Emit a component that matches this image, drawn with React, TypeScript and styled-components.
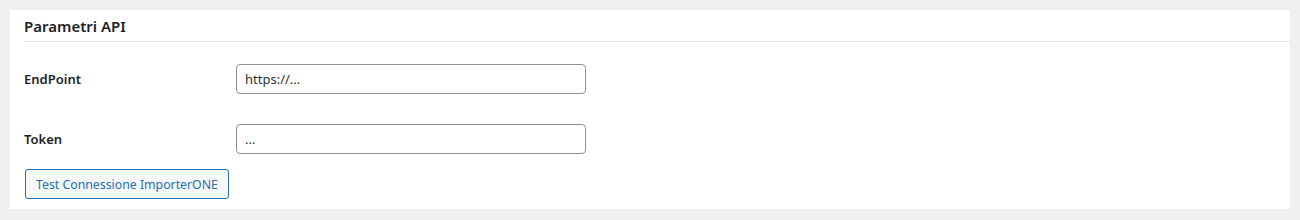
import React from 'react';
import styled, { createGlobalStyle } from 'styled-components';

const GlobalStyle = createGlobalStyle`
  html, body {
    margin: 0;
    padding: 0;
    background: #f0f0f1;
    font-family: "Noto Sans", "Open Sans", sans-serif;
    color: #1d2327;
  }
`;

const Page = styled.div`
  padding: 10px;
`;

const Postbox = styled.div`
  background: #fff;
  padding: 0 0 10px 14px;
`;

const BoxHeader = styled.h2`
  margin: 0;
  height: 31px;
  display: flex;
  align-items: center;
  font-size: 15px;
  font-weight: 600;
  color: #1d2327;
  border-bottom: 1px solid #e6e7e8;
`;

const FormTable = styled.div`
  padding-top: 7px;
`;

const FieldRow = styled.div`
  display: grid;
  grid-template-columns: 212px 350px;
  align-items: center;
  padding: 15px 0;
`;

const Label = styled.label`
  font-size: 13px;
  font-weight: 600;
  color: #1d2327;
`;

const TextInput = styled.input`
  box-sizing: border-box;
  width: 350px;
  height: 30px;
  padding: 0 8px;
  border: 1px solid #8c8f94;
  border-radius: 4px;
  font-family: inherit;
  font-size: 13px;
  color: #2c3338;
  background: #fff;
  outline: none;
`;

const Button = styled.button`
  box-sizing: border-box;
  height: 30px;
  padding: 0 10px;
  margin-left: 1px;
  border: 1px solid #2271b1;
  border-radius: 3px;
  background: #f6f7f7;
  color: #2271b1;
  font-family: inherit;
  font-size: 12.3px;
  cursor: pointer;
`;

const App: React.FC = () => (
  <>
    <GlobalStyle />
    <Page>
      <Postbox>
        <BoxHeader>Parametri API</BoxHeader>
        <FormTable>
          <FieldRow>
            <Label htmlFor="endpoint">EndPoint</Label>
            <TextInput id="endpoint" type="text" defaultValue="https://..." />
          </FieldRow>
          <FieldRow>
            <Label htmlFor="token">Token</Label>
            <TextInput id="token" type="text" defaultValue="..." />
          </FieldRow>
        </FormTable>
        <Button type="button">Test Connessione ImporterONE</Button>
      </Postbox>
    </Page>
  </>
);

export default App;
